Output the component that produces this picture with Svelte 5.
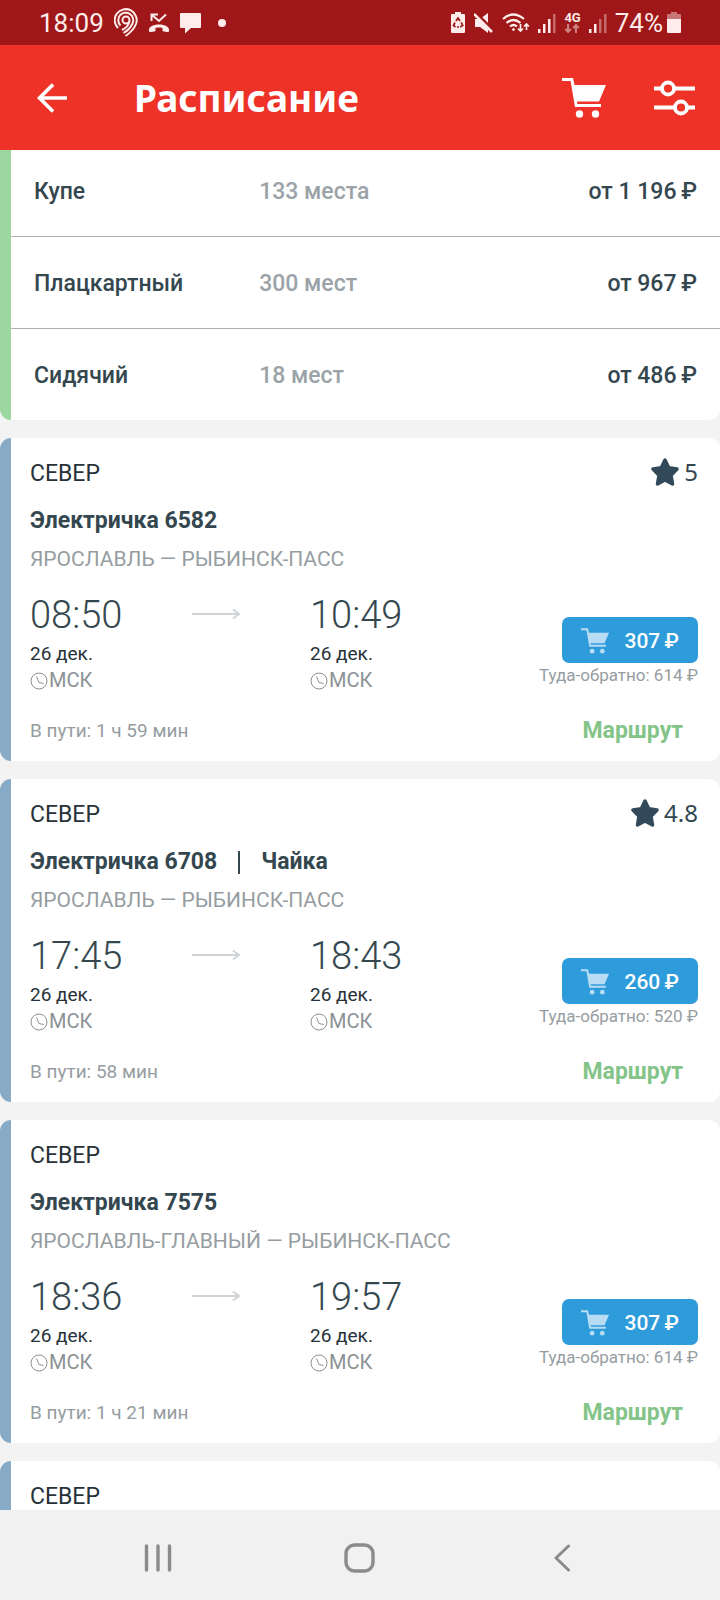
<script lang="ts">
	interface SeatClass {
		name: string;
		seats: string;
		price: string;
	}

	interface Train {
		name: string;
		brand?: string;
		route: string;
		depart: string;
		arrive: string;
		date: string;
		duration: string;
		price: number;
		roundTrip: number;
		rating?: string;
	}

	const seatClasses: SeatClass[] = [
		{ name: 'Купе', seats: '133 места', price: '1 196' },
		{ name: 'Плацкартный', seats: '300 мест', price: '967' },
		{ name: 'Сидячий', seats: '18 мест', price: '486' }
	];

	const trains: Train[] = [
		{
			name: 'Электричка 6582',
			route: 'ЯРОСЛАВЛЬ — РЫБИНСК-ПАСС',
			depart: '08:50',
			arrive: '10:49',
			date: '26 дек.',
			duration: '1 ч 59 мин',
			price: 307,
			roundTrip: 614,
			rating: '5'
		},
		{
			name: 'Электричка 6708',
			brand: 'Чайка',
			route: 'ЯРОСЛАВЛЬ — РЫБИНСК-ПАСС',
			depart: '17:45',
			arrive: '18:43',
			date: '26 дек.',
			duration: '58 мин',
			price: 260,
			roundTrip: 520,
			rating: '4.8'
		},
		{
			name: 'Электричка 7575',
			route: 'ЯРОСЛАВЛЬ-ГЛАВНЫЙ — РЫБИНСК-ПАСС',
			depart: '18:36',
			arrive: '19:57',
			date: '26 дек.',
			duration: '1 ч 21 мин',
			price: 307,
			roundTrip: 614
		}
	];

	const carrier = 'СЕВЕР';
</script>

{#snippet cart(width: number, height: number)}
	<svg {width} {height} viewBox="0 0 44 40" aria-hidden="true">
		<path d="M0 0h11l1.500 7H44l-7 16.500H15l.4 2.500H39v3H13L8.600 3H0z" fill="currentColor" />
		<circle cx="17.500" cy="36" r="3.700" fill="currentColor" />
		<circle cx="33.500" cy="36" r="3.700" fill="currentColor" />
	</svg>
{/snippet}

{#snippet signal(level: number)}
	<svg width="18" height="20" viewBox="0 0 18 20" fill="currentColor" aria-hidden="true">
		{#each [4, 9, 14, 19] as h, i (h)}
			<rect x={i * 5} y={20 - h} width="2.500" height={h} opacity={i < level ? 1 : 0.4} />
		{/each}
	</svg>
{/snippet}

{#snippet stop(time: string, date: string)}
	<div class="stop">
		<div class="time">{time}</div>
		<div class="date">{date}</div>
		<div class="zone">
			<svg width="18" height="18" viewBox="0 0 18 18" fill="none" stroke="currentColor" aria-hidden="true">
				<circle cx="9" cy="9" r="8" />
				<path d="M6.500 4.500 9 10.500l4.500 1" />
			</svg>
			<span>МСК</span>
		</div>
	</div>
{/snippet}

<div class="screen">
	<div class="status">
		<div class="status-group">
			<span class="status-text">18:09</span>
			<svg width="24" height="30" viewBox="0 0 24 30" fill="none" stroke="currentColor" stroke-width="2" aria-hidden="true">
				<circle cx="12" cy="12" r="3.500" />
				<path d="M4 20A11 11 0 1 1 22 16C20 21 16 25 11.500 28" />
				<path d="M6.500 17.500A7.500 7.500 0 1 1 18.500 15.500C17 19 13 23 9.500 25" />
				<path d="M15.500 13C15 17 12 20 8 22" />
			</svg>
			<svg width="22" height="20" viewBox="0 0 22 20" aria-hidden="true">
				<path d="M1 18c-1-4 4-6.500 10-6.500S22 14 21 18c0 1-1 1-2 1l-3-.5c-1 0-1.500-.5-1.500-1.500v-2c-2-.6-5-.6-7 0v2c0 1-.5 1.500-1.500 1.500L3 19c-1 0-2 0-2-1z" fill="currentColor" />
				<path d="M18 1.500 11 8 4 2M3.500 8V1.500H10" fill="none" stroke="currentColor" stroke-width="2" />
			</svg>
			<svg width="22" height="22" viewBox="0 0 22 22" fill="currentColor" aria-hidden="true">
				<path d="M2 1h18q1 0 1 1v13q0 1-1 1h-9l-6 5.500V16H1q-1 0-1-1V2q0-1 1-1z" />
			</svg>
			<i class="dot"></i>
		</div>
		<div class="status-group right">
			<svg width="16" height="21" viewBox="0 0 16 21" aria-hidden="true">
				<path d="M5 0h6v2h3q1 0 1 1v17q0 1-1 1H2q-1 0-1-1V3q0-1 1-1h3z" fill="currentColor" />
				<path d="m6 9 2-3 2 3M11.200 10.500l1.500 3-2.500 1.500M5.500 15 3.500 13.500l1.500-3M7 15h2" fill="none" stroke="#9f1718" stroke-width="1.700" />
			</svg>
			<svg width="20" height="20" viewBox="0 0 20 20" aria-hidden="true">
				<path d="M1 6h5l8-6v20l-8-6H1z" fill="currentColor" />
				<path d="m2 0 18 18" stroke="#9f1718" stroke-width="3" />
				<path d="m0 1 18 18" stroke="currentColor" stroke-width="2.500" />
			</svg>
			<svg width="28" height="20" viewBox="0 0 28 20" fill="none" stroke="currentColor" stroke-width="2.200" aria-hidden="true">
				<path d="M1 6q10-9 21 0M4.500 10q7-6 14 0M8 13.500q3.500-3 7 0" />
				<circle cx="11.500" cy="16.500" r="1" fill="currentColor" stroke-width="1" />
				<path d="M18.500 11v7m-2.500-2.500 2.500 2.500 2.500-2.500M24.500 17v-6m-2.500 2.500 2.500-2.500 2.500 2.500" stroke-width="1.700" />
			</svg>
			{@render signal(3)}
			<div class="network">
				<span>4G</span>
				<svg width="16" height="9" viewBox="0 0 14 8" fill="none" stroke="currentColor" stroke-width="1.800" aria-hidden="true">
					<path d="M3.500 0v7M1 4.500 3.500 7 6 4.500M10.500 8V1M8 3.500 10.500 1 13 3.500" />
				</svg>
			</div>
			{@render signal(2)}
			<div class="battery">
				<span class="status-text">74%</span>
				<svg width="14" height="21" viewBox="0 0 14 21" fill="currentColor" aria-hidden="true">
					<path d="M4 0h6v2h3q1 0 1 1v4H0V3q0-1 1-1h3z" opacity=".45" />
					<path d="M0 7h14v13q0 1-1 1H1q-1 0-1-1z" />
				</svg>
			</div>
		</div>
	</div>

	<header>
		<button aria-label="Назад">
			<svg width="30" height="30" viewBox="0 0 30 30" fill="none" stroke="currentColor" stroke-width="3.600" aria-hidden="true">
				<path d="M16 1.500 2.500 15 16 28.500M2.500 15H30" />
			</svg>
		</button>
		<h1>Расписание</h1>
		<button aria-label="Корзина">{@render cart(44, 40)}</button>
		<button class="filters" aria-label="Фильтры">
			<svg width="41" height="36" viewBox="0 0 41 36" fill="none" stroke="currentColor" stroke-width="3.800" aria-hidden="true">
				<path d="M0 8.500h8m12 0h21M0 27.500h21m12 0h8" />
				<circle cx="14" cy="8.500" r="6" />
				<circle cx="27" cy="27.500" r="6" />
			</svg>
		</button>
	</header>

	<main>
		<section class="card long-distance">
			<table>
				<tbody>
					{#each seatClasses as seat (seat.name)}
						<tr>
							<th scope="row">{seat.name}</th>
							<td class="seats">{seat.seats}</td>
							<td class="from">от {seat.price}&thinsp;₽</td>
						</tr>
					{/each}
				</tbody>
			</table>
		</section>

		{#each trains as train (train.name)}
			<article class="card">
				<div class="body">
					<div class="top">
						<span class="carrier">{carrier}</span>
						{#if train.rating}
							<span class="rating">
								<svg width="28" height="28" viewBox="0 0 28 28" aria-hidden="true">
									<path d="m14 2 3.700 7.800 8.300 1.200-6 6.200 1.500 8.800-7.500-4-7.500 4L8 17.200 2 11l8.300-1.200z" fill="currentColor" stroke="currentColor" stroke-width="3.500" stroke-linejoin="round" />
								</svg>
								{train.rating}
							</span>
						{/if}
					</div>
					<h2>
						<span>{train.name}</span>
						{#if train.brand}
							<span class="brand">{train.brand}</span>
						{/if}
					</h2>
					<div class="route">{train.route}</div>
					<div class="journey">
						{@render stop(train.depart, train.date)}
						<svg class="arrow" width="48" height="12" viewBox="0 0 48 12" fill="none" stroke="currentColor" stroke-width="2" aria-hidden="true">
							<path d="M0 6h47M41 1.500 47 6l-6 4.500" />
						</svg>
						{@render stop(train.arrive, train.date)}
						<div class="buy">
							<button>
								{@render cart(28, 26)}
								<span>{train.price}&thinsp;₽</span>
							</button>
							<div class="round-trip">Туда-обратно: {train.roundTrip} ₽</div>
						</div>
					</div>
					<div class="bottom">
						<span class="duration">В пути: {train.duration}</span>
						<a href="#route">Маршрут</a>
					</div>
				</div>
			</article>
		{/each}

		<article class="card">
			<div class="body">
				<div class="top"><span class="carrier">{carrier}</span></div>
			</div>
		</article>
	</main>

	<nav>
		<button aria-label="Недавние">
			<svg width="28" height="28" viewBox="0 0 28 28" stroke="currentColor" stroke-width="3.400" stroke-linecap="round" aria-hidden="true">
				<path d="M2.500 2v24M14 2v24M25.500 2v24" />
			</svg>
		</button>
		<button aria-label="Домой">
			<svg width="31" height="30" viewBox="0 0 31 30" fill="none" stroke="currentColor" stroke-width="3.400" aria-hidden="true">
				<rect x="2" y="2" width="27" height="26" rx="8.500" />
			</svg>
		</button>
		<button aria-label="Назад">
			<svg width="16" height="28" viewBox="0 0 16 28" fill="none" stroke="currentColor" stroke-width="3" stroke-linecap="round" stroke-linejoin="round" aria-hidden="true">
				<path d="M14.500 2 2 14l12.500 12" />
			</svg>
		</button>
	</nav>
</div>

<style>
	:global(body) {
		background: #f3f3f3;
	}
	.screen {
		display: flex;
		flex-direction: column;
		height: 100vh;
		font-family: Roboto, 'Noto Sans', sans-serif;
		color: #34474f;
	}
	svg {
		display: block;
		flex: none;
	}
	button {
		padding: 0;
		border: 0;
		background: none;
		color: inherit;
		font: inherit;
		cursor: pointer;
	}

	.status {
		flex: none;
		display: flex;
		justify-content: space-between;
		align-items: center;
		height: 45px;
		padding: 0 39px;
		background: #9f1718;
		color: #fdecea;
	}
	.status-group {
		display: flex;
		align-items: center;
		gap: 10px;
	}
	.status-group.right {
		gap: 8px;
	}
	.status-text {
		font-size: 26px;
		line-height: 32px;
	}
	.dot {
		width: 8px;
		height: 8px;
		margin-left: 6px;
		border-radius: 50%;
		background: currentColor;
	}
	.network {
		font-size: 13px;
		font-weight: 700;
		line-height: 12px;
	}
	.network svg {
		opacity: 0.5;
	}
	.battery {
		display: flex;
		align-items: center;
		gap: 4px;
	}

	header {
		flex: none;
		display: flex;
		align-items: center;
		height: 105px;
		padding: 0 25px 0 37px;
		background: #ee3228;
		color: #fff;
	}
	h1 {
		flex: 1;
		margin: 0 0 0 67px;
		font-family: 'Noto Sans', sans-serif;
		font-size: 37px;
		font-weight: 700;
		line-height: 44px;
	}
	.filters {
		margin-left: 48px;
	}

	main {
		flex: 1;
		min-height: 0;
		overflow: hidden;
	}
	.card {
		margin-bottom: 18px;
		border-radius: 11px;
		background: linear-gradient(to right, #87abc6 11px, #fff 11px);
	}
	.long-distance {
		/* list is scrolled a little under the header */
		margin-top: -5px;
		padding-left: 11px;
		border-radius: 0 0 11px 11px;
		background: linear-gradient(to right, #9cd6a0 11px, #fff 11px);
	}

	table {
		width: 100%;
		table-layout: fixed;
		border-collapse: separate;
		border-spacing: 0;
		font-size: 23px;
		font-weight: 500;
		line-height: 31px;
	}
	th,
	td {
		padding: 31px 0 29px;
		text-align: left;
		font-weight: 500;
	}
	tr:not(:last-child) > * {
		border-bottom: 1px solid #adb1b3;
	}
	th {
		width: 35%;
		box-sizing: border-box;
		padding-left: 23px;
	}
	.seats {
		width: 25%;
		color: #9ba3a8;
	}
	.from {
		padding-right: 23px;
		text-align: right;
	}

	.body {
		padding: 22px 22px 17px 30px;
	}
	.top,
	.rating,
	h2,
	.zone,
	.bottom {
		display: flex;
		align-items: center;
	}
	.top {
		justify-content: space-between;
		align-items: flex-start;
		height: 28px;
	}
	.carrier {
		font-size: 23px;
		line-height: 28px;
		color: #263238;
	}
	.rating {
		gap: 5px;
		margin-top: -2px;
		font-family: 'Noto Sans', sans-serif;
		font-size: 24px;
		line-height: 28px;
	}
	.rating svg {
		color: #314959;
	}
	h2 {
		margin: 19px 0 0;
		font-size: 23px;
		font-weight: 700;
		line-height: 28px;
	}
	.brand {
		margin-left: 21px;
		padding-left: 23px;
		background: linear-gradient(currentColor, currentColor) left center / 2px 23px no-repeat;
	}
	.route {
		margin-top: 10px;
		font-size: 21px;
		line-height: 28px;
		color: #969da1;
	}
	.journey {
		display: grid;
		grid-template-columns: 162px 118px auto 1fr;
		margin-top: 20px;
	}
	.time {
		font-size: 38px;
		font-weight: 300;
		line-height: 44px;
	}
	.date {
		margin-top: 3px;
		font-size: 19px;
		line-height: 27px;
		color: #263238;
	}
	.zone {
		gap: 1px;
		font-size: 20px;
		line-height: 27px;
		color: #8c9194;
	}
	.arrow {
		margin-top: 15px;
		color: #d0d4d6;
	}
	.buy {
		display: flex;
		flex-direction: column;
		align-items: flex-end;
		margin-top: 24px;
	}
	.buy button {
		display: flex;
		align-items: center;
		gap: 15px;
		height: 46px;
		padding: 2px 19px 0;
		border-radius: 7px;
		background: #2e9cdb;
		color: #fff;
		font-size: 21px;
		font-weight: 500;
	}
	.buy button :global(svg) {
		color: #b9dcf5;
	}
	.round-trip {
		font-size: 17px;
		line-height: 24px;
		color: #969da1;
	}
	.bottom {
		justify-content: space-between;
		margin-top: 24px;
		line-height: 26px;
	}
	.duration {
		font-size: 19px;
		color: #969da1;
	}
	.bottom a {
		margin-right: 15px;
		font-size: 23px;
		font-weight: 700;
		color: #84c488;
		text-decoration: none;
	}

	nav {
		flex: none;
		display: grid;
		grid-template-columns: repeat(3, 1fr);
		height: 90px;
		box-sizing: border-box;
		padding: 5px 8% 0;
		background: #f1f1f1;
		color: #8b8b8b;
	}
	nav button {
		display: flex;
		align-items: center;
		justify-content: center;
	}
</style>
